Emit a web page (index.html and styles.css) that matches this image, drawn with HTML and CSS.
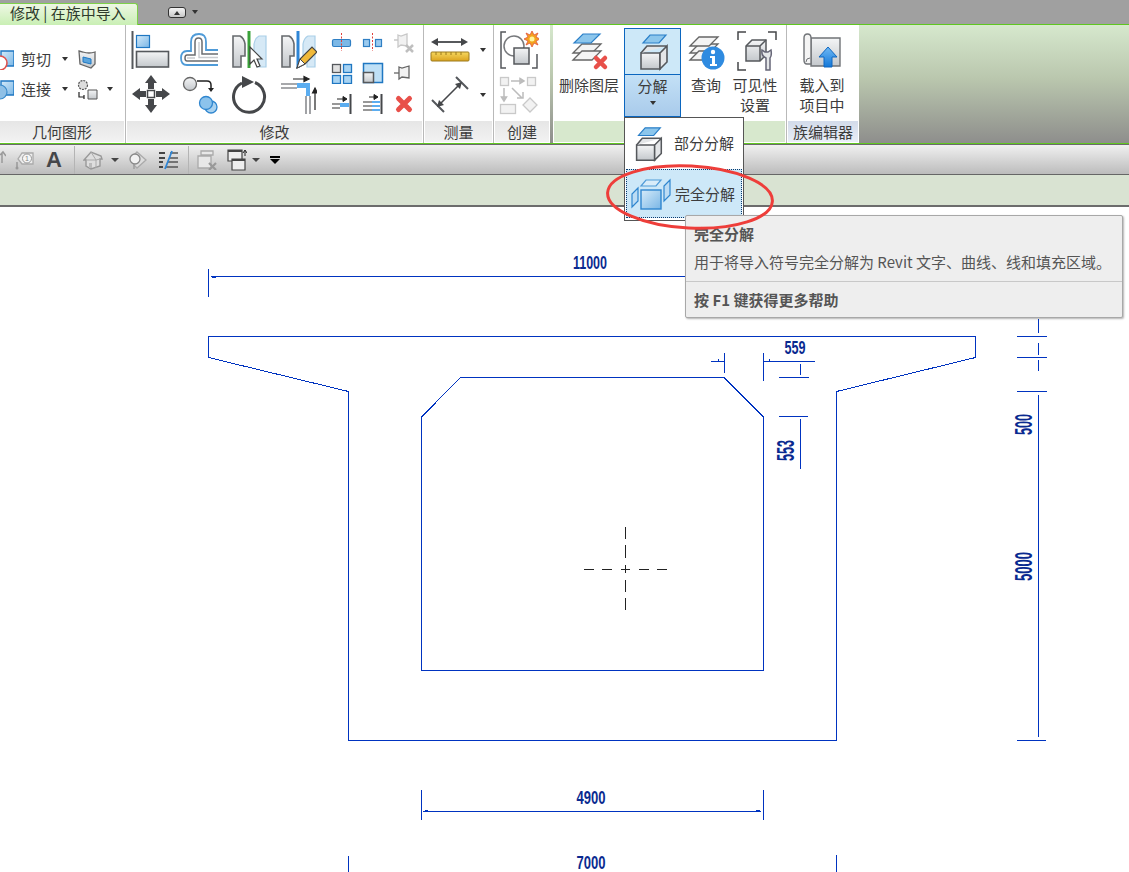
FILE: index.html
```html
<!DOCTYPE html>
<html lang="zh">
<head>
<meta charset="utf-8">
<title>修改 | 在族中导入</title>
<link rel="stylesheet" href="styles.css">
</head>
<body>
<svg class="defs" aria-hidden="true">
  <defs>
    <linearGradient id="gGrey" x1="0" y1="0" x2="0" y2="1"><stop offset="0" stop-color="#f4f5f6"/><stop offset="1" stop-color="#c4c8cc"/></linearGradient>
    <linearGradient id="gBlue" x1="0" y1="0" x2="1" y2="1"><stop offset="0" stop-color="#d6ebf9"/><stop offset="1" stop-color="#79b6e6"/></linearGradient>
    <linearGradient id="gArrow" x1="0" y1="0" x2="0" y2="1"><stop offset="0" stop-color="#6fb9f5"/><stop offset="1" stop-color="#1277d8"/></linearGradient>
    <linearGradient id="gRule" x1="0" y1="0" x2="0" y2="1"><stop offset="0" stop-color="#f6d860"/><stop offset="1" stop-color="#dba31e"/></linearGradient>
    <symbol id="cube" viewBox="0 0 40 40">
      <path d="M10 11 17 3H33L26 11Z" fill="#8cc6ec" stroke="#2a7fc8" stroke-width="1.2"/>
      <path d="M8 21V37H27V21Z" fill="url(#gGrey)" stroke="#55585c" stroke-width="1.6"/>
      <path d="M27 37 34 30V14L27 21ZM8 21 14 14H34" fill="#e4e6e8" stroke="#55585c" stroke-width="1.6"/>
    </symbol>
    <symbol id="layers" viewBox="0 0 40 40">
      <path d="M4 22 13 13H32L23 22Z" fill="#f4f4f4" stroke="#666" stroke-width="1.3"/>
      <path d="M4 29 13 20H32L23 29Z" fill="#f4f4f4" stroke="#666" stroke-width="1.3"/>
    </symbol>
    <symbol id="mirrorBase" viewBox="0 0 40 40">
      <path d="M5 7H12Q16 9 17 15V27H13V38H5Z" fill="url(#gGrey)" stroke="#66696d" stroke-width="1.6"/>
      <path d="M38 7H31Q27 9 26 15V27H30V38H38Z" fill="#d6e9f6" stroke="#a9cfe8" stroke-width="1.2"/>
    </symbol>
  </defs>
</svg>

<div class="app">
  <header class="tabbar">
    <div class="tab">修改 | 在族中导入</div>
    <div class="tab-ctl"><span class="tab-up"></span></div>
    <span class="caret caret-tab"></span>
  </header>

  <section class="ribbon">
    <div class="panel panel-geo">
      <div class="panel-body geo-rows">
        <div class="geo-row">
          <svg class="geo-lead" width="14" height="20" viewBox="0 0 14 20"><path d="M1 1H14V16H1Z" fill="url(#gBlue)" stroke="#1f77c2" stroke-width="1.4"/><circle cx="0" cy="13" r="7" fill="#fff" stroke="#e0524d" stroke-width="1.6"/></svg>
          <span class="geo-label">剪切</span>
          <span class="caret caret-geo"></span>
          <svg class="geo-side" width="20" height="20" viewBox="0 0 20 20"><path d="M2 2 6 3Q12 5 18 3V15L14 19 3 15Z" fill="url(#gGrey)" stroke="#666" stroke-width="1.3"/><path d="M6 8 14 10V15L6 13Z" fill="#5aa5dd" stroke="#1f77c2"/></svg>
        </div>
        <div class="geo-row">
          <svg class="geo-lead" width="14" height="20" viewBox="0 0 14 20"><path d="M1 1H14V15H1Z" fill="url(#gBlue)" stroke="#1f77c2" stroke-width="1.4"/><circle cx="0" cy="12" r="7" fill="#8fc0e6" stroke="#3a8bcb" stroke-width="1.2"/></svg>
          <span class="geo-label">连接</span>
          <span class="caret caret-geo"></span>
          <svg class="geo-side" width="21" height="21" viewBox="0 0 21 21"><circle cx="6" cy="6" r="4.5" fill="#ddd" stroke="#555" stroke-width="1.2" stroke-dasharray="2 1"/><path d="M11 11H20V20H11Z" fill="url(#gGrey)" stroke="#555"/><path d="M2 13V18H7M7 16V20" fill="none" stroke="#222" stroke-width="1.2"/></svg>
          <span class="caret caret-geo2"></span>
        </div>
      </div>
      <div class="panel-foot">几何图形</div>
    </div>

    <div class="panel panel-mod">
      <div class="panel-body mod-body">
        <div class="mod-large">
          <svg width="40" height="40" viewBox="0 0 40 40"><path d="M2.5 2V41" stroke="#55585c" stroke-width="2"/><rect x="6.5" y="6.5" width="13" height="12" fill="url(#gBlue)" stroke="#1f77c2" stroke-width="1.2"/><rect x="6.5" y="22.5" width="32" height="15.5" fill="url(#gGrey)" stroke="#55585c" stroke-width="1.6"/></svg>
          <svg width="40" height="40" viewBox="0 0 40 40"><path d="M39 21H27V13Q27 5 20 5 12 5 12 13V22H8Q2 22 2 29 2 36 8 36H39" fill="none" stroke="#4f9bd8" stroke-width="1.8"/><path d="M39 25H23V13Q23 9 19.500 9 16 9 16 13V26H8Q6 26 6 29 6 32 8 32H39" fill="none" stroke="#6a6c70" stroke-width="1.5"/><path d="M39 28.500H20V13M8 29H16" fill="none" stroke="#c9ccd0" stroke-width="1.4"/></svg>
          <svg width="40" height="40" viewBox="0 0 40 40"><use href="#mirrorBase"/><path d="M21 2V39" stroke="#3aa23a" stroke-width="3"/><path d="M22 18V35L26 31 29 38 32 37 29 30 34 30Z" fill="#fff" stroke="#444" stroke-width="1.2"/></svg>
          <svg width="40" height="40" viewBox="0 0 40 40"><use href="#mirrorBase"/><path d="M21 2V39" stroke="#2f86d6" stroke-width="3"/><path d="M20 39 23 30 35 18 40 23 28 35Z" fill="#f0b93a" stroke="#444" stroke-width="1.2"/><path d="M20 39 23 30 28 35Z" fill="#fff" stroke="#444"/></svg>

          <svg width="40" height="40" viewBox="0 0 40 40"><path d="M21 1 27 9H24V15H18V9H15ZM21 39 15 31H18V25H24V31H27ZM2 20 10 14V17H16V23H10V26ZM40 20 32 26V23H26V17H32V14Z" fill="#45474a"/><rect x="17.500" y="16.500" width="7" height="7" fill="#fff" stroke="#45474a" stroke-width="1.500"/></svg>
          <svg width="40" height="40" viewBox="0 0 40 40"><circle cx="11" cy="10" r="6.500" fill="url(#gGrey)" stroke="#666" stroke-width="1.300"/><path d="M18 7H28Q32 7 32 11V15" fill="none" stroke="#222" stroke-width="1.500"/><path d="M29 14H35L32 18Z" fill="#222"/><circle cx="32" cy="33" r="6" fill="#a9d2f0" stroke="#2f86cf" stroke-width="1.300"/><circle cx="27" cy="29" r="6.500" fill="#8cc3ec" stroke="#2f86cf" stroke-width="1.300"/></svg>
          <svg width="40" height="40" viewBox="0 0 40 40"><path d="M14 9A15.500 15.500 0 1 0 27 8.500" fill="none" stroke="#45474a" stroke-width="3"/><path d="M14 2 26 8 14 14Z" fill="#45474a"/></svg>
          <svg width="40" height="40" viewBox="0 0 40 40"><path d="M16 5H30M27 2.500 32 5 27 7.500Z" fill="#222" stroke="#222" stroke-width="1.200"/><path d="M4 10H20M4 14H20" stroke="#8a8c90" stroke-width="1.600"/><path d="M20 9H33V22H29V14H20Z" fill="#5badf0"/><path d="M29 22V40M33 22V40" stroke="#8a8c90" stroke-width="1.600"/><path d="M38 36V17M35.500 19 38 14 40.500 19Z" fill="#222" stroke="#222" stroke-width="1.200"/></svg>
        </div>
        <div class="mod-small">
          <svg width="22" height="22" viewBox="0 0 22 22"><rect x="1.500" y="8.500" width="18" height="7" rx="1.500" fill="#7cb8e6" stroke="#2f7fc4" stroke-width="1.200"/><path d="M10.500 2V20" stroke="#e0403a" stroke-dasharray="2 1.500"/></svg>
          <svg width="22" height="22" viewBox="0 0 22 22"><rect x="1.500" y="8.500" width="6" height="7" fill="#9ccbef" stroke="#2f7fc4" stroke-width="1.200"/><rect x="13.500" y="8.500" width="6" height="7" fill="#9ccbef" stroke="#2f7fc4" stroke-width="1.200"/><path d="M10.500 2V20" stroke="#e0403a" stroke-dasharray="2 1.500"/></svg>
          <svg width="22" height="22" viewBox="0 0 22 22"><path d="M5 4 8 5 14 3V15L8 14 5 16ZM1 9H5" fill="#f2f2f2" stroke="#c8c8c8" stroke-width="1.300"/><path d="M13 14 20 21M20 14 13 21" stroke="#bfbfbf" stroke-width="2.500"/></svg>

          <svg width="22" height="22" viewBox="0 0 22 22"><rect x="1.500" y="2.500" width="8" height="8" fill="#e0e0e0" stroke="#55585c" stroke-width="1.300"/><rect x="12.500" y="2.500" width="8" height="8" fill="#a8d3f2" stroke="#1f77c2" stroke-width="1.300"/><rect x="1.500" y="13.500" width="8" height="8" fill="#a8d3f2" stroke="#1f77c2" stroke-width="1.300"/><rect x="12.500" y="13.500" width="8" height="8" fill="#a8d3f2" stroke="#1f77c2" stroke-width="1.300"/></svg>
          <svg width="22" height="22" viewBox="0 0 22 22"><rect x="1.500" y="1.500" width="19" height="19" fill="#bfe0f6" stroke="#1f77c2" stroke-width="1.500"/><rect x="1.500" y="10.500" width="10" height="10" fill="url(#gGrey)" stroke="#55585c" stroke-width="1.500"/></svg>
          <svg width="22" height="22" viewBox="0 0 22 22"><path d="M6 5 9 6 16 4V16L9 15 6 17Z" fill="#f2f2f2" stroke="#666" stroke-width="1.300"/><path d="M1 11H6" stroke="#666" stroke-width="1.300"/></svg>

          <svg width="22" height="22" viewBox="0 0 22 22"><path d="M19.500 1V21" stroke="#45474a" stroke-width="2"/><path d="M6 6H15M12 3.500 16 6 12 8.500Z" fill="#222" stroke="#222"/><path d="M1 11H9M1 15H9" stroke="#777" stroke-width="1.600"/><path d="M9 10H18V14H9Z" fill="#5badf0"/></svg>
          <svg width="22" height="22" viewBox="0 0 22 22"><path d="M19.500 1V21" stroke="#45474a" stroke-width="2"/><path d="M7 4H15M12 1.500 16 4 12 6.500Z" fill="#222" stroke="#222"/><path d="M1 9H10M1 13H10M1 17H10" stroke="#777" stroke-width="1.600"/><path d="M10 8H18V10H10ZM10 12H18V14H10ZM10 16H18V18H10Z" fill="#5badf0"/></svg>
          <svg width="22" height="22" viewBox="0 0 22 22"><path d="M4 7 15 18M15 7 4 18" transform="translate(1.500 -1.500)" stroke="#e8504a" stroke-width="5" stroke-linecap="round"/></svg>
        </div>
      </div>
      <div class="panel-foot">修改</div>
    </div>

    <div class="panel panel-measure">
      <div class="panel-body measure-body">
        <div class="measure-row">
          <svg width="40" height="26" viewBox="0 0 40 26"><path d="M6 5H33" stroke="#45474a" stroke-width="1.800"/><path d="M1 5 8 1V9ZM38 5 31 1V9Z" fill="#45474a"/><rect x="1" y="15" width="38" height="9" rx="1" fill="url(#gRule)" stroke="#9c7a1c"/><path d="M6 15V18M11 15V18M16 15V18M21 15V18M26 15V18M31 15V18" stroke="#9c7a1c"/></svg>
          <span class="caret caret-measure"></span>
        </div>
        <div class="measure-row measure-row-2">
          <svg width="40" height="40" viewBox="0 0 40 40"><path d="M8 31 31 8" stroke="#45474a" stroke-width="1.600"/><path d="M26 2 38 14M2 25 14 37" stroke="#55585c" stroke-width="2"/><path d="M32 7 30 14 25 9ZM7 32 9 25 14 30Z" fill="#45474a"/></svg>
          <span class="caret caret-measure"></span>
        </div>
      </div>
      <div class="panel-foot">测量</div>
    </div>

    <div class="panel panel-create">
      <div class="panel-body create-body">
        <svg width="40" height="40" viewBox="0 0 40 40"><path d="M7 2H2V38H7M33 38H38V24" fill="none" stroke="#55585c" stroke-width="1.500"/><circle cx="15" cy="16" r="10" fill="none" stroke="#77797c" stroke-width="1.500"/><path d="M15 18H30V34H15Z" fill="url(#gGrey)" stroke="#55585c" stroke-width="1.500"/><path d="M33 1 35 5 39 3 37 7 41 9 37 11 39 15 35 13 33 17 31 13 27 15 29 11 25 9 29 7 27 3 31 5Z" fill="#f4a21e" stroke="#e0503a" stroke-width=".8"/><circle cx="33" cy="9" r="2.500" fill="#fff59a"/></svg>
        <svg width="40" height="40" viewBox="0 0 40 40"><g fill="#f2f2f2" stroke="#c9c9c9" stroke-width="1.300"><rect x="1.500" y="1.500" width="8" height="8"/><rect x="28.500" y="1.500" width="8" height="8"/><rect x="1.500" y="28.500" width="15" height="9"/><path d="M31 22 38 29 31 36 24 29Z"/></g><path d="M12 5H24M21 2.500 25 5 21 7.500ZM5 12V24M2.500 21 5 25 7.500 21ZM13 12 23 22M18 22H24V16" fill="none" stroke="#bcbcbc" stroke-width="1.500"/></svg>
      </div>
      <div class="panel-foot">创建</div>
    </div>

    <div class="panel panel-tools">
      <div class="panel-body tools-body">
        <div class="tool tool-del">
          <svg width="40" height="40" viewBox="0 0 40 40"><use href="#layers"/><path d="M5 12 14 3H31L22 12Z" fill="#8cc6ec" stroke="#2a7fc8" stroke-width="1.200"/><path d="M27 27 36 36M36 27 27 36" stroke="#e8504a" stroke-width="4.500" stroke-linecap="round"/></svg>
          <span class="tool-label">删除图层</span>
        </div>
        <div class="split">
          <div class="split-top"><svg width="40" height="40"><use href="#cube"/></svg></div>
          <div class="split-bottom"><span class="tool-label">分解</span><span class="caret caret-split"></span></div>
        </div>
        <div class="tool tool-query">
          <svg width="40" height="40" viewBox="0 0 40 40"><use href="#layers"/><path d="M4 15 13 6H32L23 15Z" fill="#f4f4f4" stroke="#666" stroke-width="1.300"/><circle cx="27" cy="27" r="11.500" fill="#2f8be0"/><circle cx="27" cy="21" r="2.200" fill="#fff"/><path d="M24 25H29V33H31V35H24V33H26V27H24Z" fill="#fff"/></svg>
          <span class="tool-label">查询</span>
        </div>
        <div class="tool tool-vis">
          <svg width="40" height="40" viewBox="0 0 40 40"><path d="M1 9V1H9M31 1H39V9M1 31V39H9" fill="none" stroke="#45474a" stroke-width="1.500"/><path d="M9 15 15 9H29V24L23 30H9Z" fill="url(#gGrey)" stroke="#55585c" stroke-width="1.500"/><path d="M9 15H23V30M23 15 29 9" fill="none" stroke="#55585c" stroke-width="1.500"/><path d="M29 39V27Q24 25 25 19L28 21 31 21 34 19Q35 25 33 27V39Z" fill="#e4e6e8" stroke="#667" stroke-width="1.500"/></svg>
          <span class="tool-label">可见性<br>设置</span>
        </div>
      </div>
      <div class="panel-foot foot-green"></div>
    </div>

    <div class="panel panel-family">
      <div class="panel-body tools-body">
        <div class="tool tool-load">
          <svg width="40" height="36" viewBox="0 0 40 36"><path d="M9 5H38V33H9Z" fill="url(#gGrey)" stroke="#707377" stroke-width="1.400"/><path d="M2 27V5Q2 1 5.500 1 9 1 9 5V31H5Q2 31 2 27Z" fill="#f4f4f4" stroke="#707377" stroke-width="1.400"/><path d="M4 29Q4 25 8 25" fill="none" stroke="#707377"/><path d="M26 14 35 24H30V34H22V24H17Z" fill="url(#gArrow)" stroke="#0f66c0"/></svg>
          <span class="tool-label">载入到<br>项目中</span>
        </div>
      </div>
      <div class="panel-foot foot-lav">族编辑器</div>
    </div>
  </section>

  <nav class="toolbar">
    <svg width="6" height="20" viewBox="0 0 6 20"><path d="M0 5 3 2 6 6M2 3V13" fill="none" stroke="#999" stroke-width="1.500"/></svg>
    <svg class="m8" width="20" height="20" viewBox="0 0 20 20"><path d="M8 3H19V14H8L4 9Z" fill="#ececec" stroke="#aaa" stroke-width="1.300"/><circle cx="13" cy="8.500" r="4.500" fill="#f6f6f6" stroke="#999"/><text class="tag-one" x="13" y="11" text-anchor="middle">1</text><path d="M3 19V12" stroke="#999" stroke-width="1.500"/><circle cx="3" cy="18" r="1.500" fill="#999"/></svg>
    <span class="tb-a m10">A</span>
    <span class="tb-sep m10"></span>
    <svg class="m8" width="20" height="20" viewBox="0 0 20 20"><path d="M1 10 8 2 18 6 19 9 17 9V16L8 19 3 16V10Z" fill="#dedede" stroke="#999" stroke-width="1.400"/><path d="M8 2 13 10V18M3 10H8L13 10 17 9" fill="none" stroke="#aaa"/><path d="M6 13H9V18H6Z" fill="#bbb"/></svg>
    <span class="caret caret-tb m8"></span>
    <svg class="m6" width="20" height="20" viewBox="0 0 20 20"><path d="M10 2 19 10 10 18 7 15V5Z" fill="#ddd" stroke="#aaa" stroke-width="1.300"/><circle cx="8" cy="9" r="5" fill="#f2f2f2" stroke="#888" stroke-width="1.300"/><path d="M7 14V19" stroke="#999" stroke-width="1.300"/></svg>
    <svg class="m11" width="20" height="20" viewBox="0 0 20 20"><path d="M1 3H7M1 8H7M1 12H5M1 17H5" stroke="#444" stroke-width="2"/><path d="M12 3H20M11 8H20M10 12H20M8 17H20" stroke="#555" stroke-width="1.500"/><path d="M14 1 7 19" stroke="#2f86d6" stroke-width="1.800"/></svg>
    <span class="tb-sep m10"></span>
    <svg class="m8" width="20" height="20" viewBox="0 0 20 20"><path d="M4 1H16V5H4ZM1 6H14V18H1Z" fill="#e8e8e8" stroke="#aaa" stroke-width="1.300"/><path d="M12 13 19 20M19 13 12 20" stroke="#999" stroke-width="2.200"/></svg>
    <svg class="m10" width="20" height="22" viewBox="0 0 20 22"><path d="M1 1H15V12H1Z" fill="#eee" stroke="#444" stroke-width="1.200"/><path d="M1 1H15V3H1Z" fill="#444"/><path d="M5 10H18V21H5Z" fill="#eee" stroke="#444" stroke-width="1.200"/><path d="M5 10H18V12H5Z" fill="#444"/><path d="M18 2V7M16 4 18 1 20 4" fill="none" stroke="#222"/></svg>
    <span class="caret caret-tb m5"></span>
    <span class="tb-over m8"></span>
  </nav>

  <div class="optbar"></div>

  <svg class="canvas" viewBox="0 207 1129 665" width="1129" height="665">
    <g class="ln">
      <path d="M208.500 336.500H975.500V357.500L836.500 391.500V740.500H348.500V391.500L208.500 357.500Z"/>
      <path d="M460.500 377.500H724L763.500 417V670.500H421.500V417Z"/>
      <path d="M208.500 269V297M211 276.500H700M212 277.500H216"/>
      <path d="M1038.500 319V333M1017 336.500H1047M1038.500 343V355M1017 357.500H1047M1038.500 360V371M1017 391.500H1047M1038.500 395V737M1017 740.500H1046"/>
      <path d="M711 361.500H724M718 359V361M724.500 353V373M763.500 353V381M763.500 361.500H815M769 359V361M800.500 364V375M779 377.500H809M779 416.500H808M800.500 419V469"/>
      <path d="M421.500 790V820M763.500 790V820M423 811.500H761M425 810.500H428M756 810.500H760M348.500 856V872M836.500 855V872"/>
    </g>
    <path class="cross" d="M625.500 527V539M625.500 545V558M625.500 565V573M625.500 580V592M625.500 598V610M584 569.500H594M602 569.500H612M621 569.500H630M639 569.500H649M657 569.500H667"/>
    <g class="dim">
      <text x="590" y="269" text-anchor="middle" textLength="34" lengthAdjust="spacingAndGlyphs">11000</text>
      <text x="795" y="354" text-anchor="middle" textLength="21" lengthAdjust="spacingAndGlyphs">559</text>
      <text x="591" y="804" text-anchor="middle" textLength="29" lengthAdjust="spacingAndGlyphs">4900</text>
      <text x="591" y="869" text-anchor="middle" textLength="29" lengthAdjust="spacingAndGlyphs">7000</text>
      <text class="dim-v" transform="translate(794 450.500) rotate(-90)" text-anchor="middle" textLength="21" lengthAdjust="spacingAndGlyphs">553</text>
      <text class="dim-v" transform="translate(1032 424.500) rotate(-90)" text-anchor="middle" textLength="21" lengthAdjust="spacingAndGlyphs">500</text>
      <text class="dim-v" transform="translate(1032 566.500) rotate(-90)" text-anchor="middle" textLength="29" lengthAdjust="spacingAndGlyphs">5000</text>
    </g>
  </svg>

  <div class="menu">
    <div class="menu-item">
      <svg class="menu-icon-1" width="38" height="38"><use href="#cube"/></svg>
      <span>部分分解</span>
    </div>
    <div class="menu-item menu-item-on">
      <svg class="menu-icon-2" width="40" height="34" viewBox="0 0 40 34"><path d="M10 9 15 3H30L25 9Z" fill="#d8ecf9" stroke="#4f9bd8" stroke-width="1.200"/><path d="M7 11 1 17V30L7 24ZM33 9 39 3V18L33 24Z" fill="#bcdcf4" stroke="#2f86cf" stroke-width="1.200"/><rect x="10" y="13" width="20" height="19" fill="url(#gBlue)" stroke="#2f86cf" stroke-width="1.400"/></svg>
      <span>完全分解</span>
    </div>
  </div>

  <aside class="tip">
    <div class="tip-title">完全分解</div>
    <div class="tip-desc">用于将导入符号完全分解为 Revit 文字、曲线、线和填充区域。</div>
    <div class="tip-help">按 F1 键获得更多帮助</div>
  </aside>

  <svg class="mark" width="180" height="76" viewBox="0 0 180 76"><ellipse cx="90" cy="38" rx="82.500" ry="31" transform="rotate(3 90 38)" fill="none" stroke="#ee3e3a" stroke-width="3"/></svg>
</div>
</body>
</html>
```
FILE: styles.css
```css
* { box-sizing: border-box; }
html, body { margin: 0; padding: 0; background: #fff; }
body { font-family: "Noto Sans CJK SC", "Liberation Sans", sans-serif; color: #3c3c3c; font-size: 15px; }
svg { display: block; flex: none; }
.defs { position: absolute; width: 0; height: 0; }
.app { position: relative; width: 1129px; height: 872px; overflow: hidden; }

/* tab strip */
.tabbar { height: 24px; background: #a0a0a0; display: flex; align-items: flex-start; }
.tab { width: 138px; height: 22px; margin-top: 3px; padding-left: 10px; border: 1px solid #7ed04a; border-left: 0; border-bottom: 0; border-radius: 0 3px 0 0; background: linear-gradient(#eef7e4, #c9efb4); color: #2e3a2c; line-height: 18px; white-space: nowrap; }
.tab-ctl { width: 18px; height: 11px; margin: 7px 0 0 30px; border-radius: 3px; border: 1px solid #333; background: linear-gradient(#f4f4f4, #c8c8c8); display: flex; align-items: center; justify-content: center; }
.tab-up { width: 0; height: 0; border: 3.5px solid transparent; border-top: 0; border-bottom: 4px solid #333; }
.caret { display: block; flex: none; width: 0; height: 0; border-left: 3.5px solid transparent; border-right: 3.5px solid transparent; border-top: 4px solid #333; }
.caret-tab { margin: 10px 0 0 6px; }

/* ribbon */
.ribbon { height: 120px; display: flex; border-top: 1px solid #5fc71f; border-bottom: 1px solid #5fc71f; background: linear-gradient(#d6e8cd, #bac7ae 45%, #8e8e8c); }
.panel { display: flex; flex-direction: column; background: #fff; height: 118px; }
.panel-body { flex: 1; min-height: 0; }
.panel-foot { height: 21px; margin: 0 1px 1px 1px; background: linear-gradient(#e6e6e6, #f2f2f2); text-align: center; line-height: 21px; color: #3c3c3c; }
.panel-geo { width: 126px; border-right: 1px solid #b9b9b9; }
.panel-mod { width: 298px; border-right: 1px solid #b9b9b9; }
.panel-measure { width: 70px; border-right: 1px solid #b9b9b9; }
.panel-create { width: 56px; }
.panel-tools { width: 234px; margin-left: 3px; border-right: 1px solid #b9b9b9; }
.panel-family { width: 72px; }
.panel-geo .panel-foot { margin-left: 0; }
.foot-green { background: #d7e8cd; margin-left: 1px; }
.foot-lav { background: linear-gradient(#d3dbea, #e9eef7); }

/* geometry panel */
.geo-rows { display: flex; flex-direction: column; gap: 4px; padding-top: 21px; }
.geo-row { height: 26px; display: flex; align-items: center; }
.geo-label { margin-left: 7px; width: 30px; line-height: 26px; white-space: nowrap; }
.caret-geo { margin-left: 11px; }
.geo-side { margin-left: 9px; }
.caret-geo2 { margin-left: 9px; }
.geo-lead { margin-top: 2px; }

/* modify panel */
.mod-body { display: flex; padding: 4px 0 0 4px; }
.mod-large { display: grid; grid-template-columns: repeat(4, 40px); column-gap: 9px; row-gap: 5px; align-content: start; }
.mod-small { display: grid; grid-template-columns: repeat(3, 22px); column-gap: 9px; row-gap: 9px; align-content: start; margin: 2px 0 0 14px; }

/* measure panel */
.measure-body { padding: 12px 0 0 6px; }
.measure-row { display: flex; align-items: center; }
.measure-row-2 { margin-top: 12px; }
.caret-measure { margin-left: 10px; }

/* create panel */
.create-body { display: flex; flex-direction: column; align-items: center; gap: 6px; padding: 5px 6px 0 0; }

/* tools */
.tools-body { display: flex; }
.tool { display: flex; flex-direction: column; align-items: center; padding-top: 6px; }
.tool-label { display: block; margin-top: 4px; line-height: 20px; text-align: center; white-space: nowrap; }
.tool-del { width: 71px; padding-left: 1px; }
.tool-query { width: 50px; }
.tool-vis { width: 48px; }
.tool-vis svg { margin-left: 4px; }
.tool-load { width: 70px; padding-top: 8px; }
.tool-load .tool-label { margin-top: 6px; }
.split { width: 57px; margin-top: 3px; height: 89px; display: flex; flex-direction: column; }
.split-top { height: 47px; border: 1px solid #0b66bf; background: #cde8f8; display: flex; justify-content: center; padding-top: 3px; }
.split-bottom { height: 42px; border: 1px solid #0b66bf; border-top: 0; background: linear-gradient(#c3e0f6, #a9cbeb); display: flex; flex-direction: column; align-items: center; }
.split-bottom .tool-label { margin-top: 1px; }
.caret-split { margin-top: 5px; }

/* quick toolbar */
.toolbar { height: 31px; display: flex; align-items: center; border-top: 1px solid #6a6a6a; border-bottom: 1px solid #666; background: linear-gradient(#f0f0f0, #bcbcbc); }
.m5 { margin-left: 5px; }
.m6 { margin-left: 6px; }
.m8 { margin-left: 8px; }
.m10 { margin-left: 10px; }
.m11 { margin-left: 11px; }
.tb-a { width: 20px; font: bold 22px/1 "Liberation Sans", sans-serif; color: #45474a; text-align: center; }
.tag-one { font: 7px "Liberation Sans", sans-serif; fill: #888; }
.tb-sep { width: 1px; height: 28px; background: #b4b4b4; }
.caret-tb { border-left-width: 4px; border-right-width: 4px; border-top-width: 4px; border-top-color: #444; margin-right: 2px; }
.tb-over { width: 10px; height: 7px; background: linear-gradient(#000 0 2px, transparent 2px); position: relative; }
.tb-over::after { content: ""; position: absolute; left: 0; top: 3px; border-left: 5px solid transparent; border-right: 5px solid transparent; border-top: 5px solid #000; }

.optbar { height: 32px; background: #d9e3d2; border-bottom: 2px solid #6c6c6c; }
.canvas { background: #fff; }
.ln path { fill: none; stroke: #0033c0; stroke-width: 1; shape-rendering: crispEdges; }
.cross { fill: none; stroke: #222; stroke-width: 1; shape-rendering: crispEdges; }
.dim text { font: bold 19px "Liberation Sans", sans-serif; fill: #0a2a90; }
.dim .dim-v { font-size: 23px; }

/* dropdown */
.menu { position: absolute; left: 624px; top: 117px; width: 120px; height: 104px; background: #fff; border: 1px solid #555; }
.menu-item { height: 50px; display: flex; align-items: center; padding-left: 4px; line-height: 20px; }
.menu-icon-1 { margin: 2px 7px 0 0; }
.menu-item-on { height: 49px; margin: 1px 0 0 1px; width: 116px; background: #cde8f8; border: 1px dotted #0a3a70; }
.menu-icon-2 { margin-right: 4px; }

/* tooltip */
.tip { position: absolute; left: 685px; top: 215px; width: 438px; height: 103px; background: #eeeeee; border: 1px solid #a8a8a8; border-radius: 2px; box-shadow: 1px 1px 2px rgba(0,0,0,.3); color: #555; display: flex; flex-direction: column; }
.tip-title { padding: 8px 0 0 8px; line-height: 20px; font-weight: 700; }
.tip-desc { padding: 8px 0 0 8px; line-height: 20px; white-space: nowrap; height: 38px; border-bottom: 1px solid #c8c8c8; }
.tip-help { padding: 8px 0 0 8px; line-height: 20px; font-weight: 700; }

/* annotation */
.mark { position: absolute; left: 600px; top: 159px; }
```
